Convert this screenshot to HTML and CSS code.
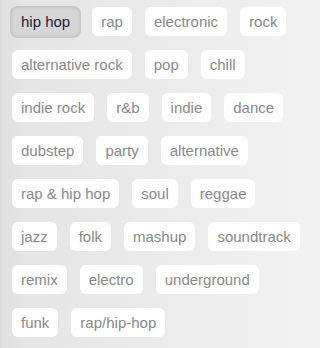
FILE: index.html
```html
<!DOCTYPE html>
<html>
<head>
<meta charset="utf-8">
<link rel="stylesheet" href="styles.css">
</head>
<body>
<div class="tags">
  <span class="tag active">hip hop</span>
  <span class="tag">rap</span>
  <span class="tag">electronic</span>
  <span class="tag">rock</span>
  <span class="tag">alternative rock</span>
  <span class="tag">pop</span>
  <span class="tag">chill</span>
  <span class="tag">indie rock</span>
  <span class="tag">r&amp;b</span>
  <span class="tag">indie</span>
  <span class="tag">dance</span>
  <span class="tag">dubstep</span>
  <span class="tag">party</span>
  <span class="tag">alternative</span>
  <span class="tag">rap &amp; hip hop</span>
  <span class="tag">soul</span>
  <span class="tag">reggae</span>
  <span class="tag">jazz</span>
  <span class="tag">folk</span>
  <span class="tag">mashup</span>
  <span class="tag">soundtrack</span>
  <span class="tag">remix</span>
  <span class="tag">electro</span>
  <span class="tag">underground</span>
  <span class="tag">funk</span>
  <span class="tag">rap/hip-hop</span>
</div>
</body>
</html>
```
FILE: styles.css
```css
html, body {
  margin: 0;
  padding: 0;
  height: 100%;
}
body {
  background: linear-gradient(to right, #dadada 0, #e0e0e0 3px, #e5e5e5 8%, #eaeaea 45%, #f2f2f2 100%);
  font-family: "Liberation Sans", Arial, sans-serif;
}
.tags {
  display: flex;
  flex-wrap: wrap;
  column-gap: 13px;
  row-gap: 14px;
  padding: 7px 0 0 12px;
  width: 290px;
}
.tag {
  display: block;
  background: #ffffff;
  color: #898989;
  font-size: 15px;
  line-height: 17px;
  padding: 6px 9px;
  border-radius: 6px;
}
.tag.active {
  background: #d6d6d6;
  color: #1d1d3a;
  padding: 7.5px 11px;
  margin: -1.5px -2px;
  border-radius: 8px;
  box-shadow: inset 0 0 4px rgba(0,0,0,0.18);
}
```
